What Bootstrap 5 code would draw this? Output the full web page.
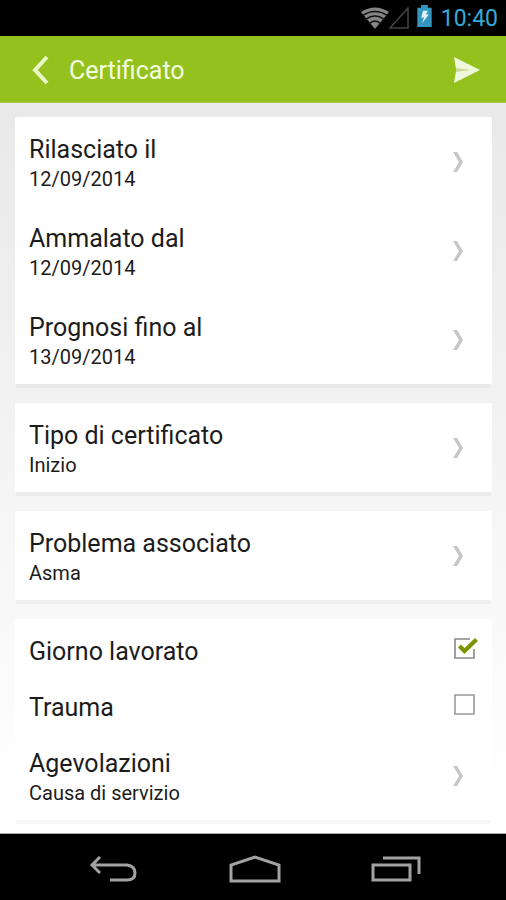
<!DOCTYPE html>
<html lang="it">
<head>
<meta charset="utf-8">
<meta name="viewport" content="width=device-width, initial-scale=1">
<title>Certificato</title>
<link href="https://cdn.jsdelivr.net/npm/bootstrap@5.3.0/dist/css/bootstrap.min.css" rel="stylesheet">
<style>
  body { font-family: Roboto, "Noto Sans", sans-serif; color: #1c1c1c; background: #000; }
  button { border: 0; background: none; padding: 0; color: inherit; }
  svg { display: block; flex: none; }
  .status-bar { height: 36px; background: #000; color: #36a9d8; padding-right: 8px; }
  .clock { font-size: 23px; line-height: 36px; margin-left: 9px; padding-top: 2px; }
  .app-bar { height: 67px; background: #95c11f; color: #f4fde0; padding: 2px 25px 0 31px; border-bottom: 1px solid #a9cd50; }
  .app-title { font-size: 25px; line-height: 30px; font-weight: 400; padding: 2px 0 0 20px; }
  .page-body { background: linear-gradient(#e9e9e9, #f4f4f4 50%, #fff 95%); padding: 14px 14px 13px 15px; gap: 19px; border-bottom: 1px solid #aaa; }
  .panel { background: #fff; border-radius: 2px; box-shadow: 0 5px 0 -1px rgba(0, 0, 0, .035); }
  .entry { padding: 18px 28px 13px 14px; }
  .entry-check { padding: 18px 13px 8px 14px; }
  .entry-title { font-size: 25px; line-height: 30px; }
  .entry-value { font-size: 20px; line-height: 28px; }
  .tick {
    appearance: none; flex: none; width: 25px; height: 24px; margin: 0;
    background: url("data:image/svg+xml,%3Csvg xmlns='http://www.w3.org/2000/svg' viewBox='0 0 25 24'%3E%3Cpath d='M1 2H20V21H1Z' fill='none' stroke='%23999' stroke-width='1.6'/%3E%3C/svg%3E");
  }
  .tick:checked {
    background-image: url("data:image/svg+xml,%3Csvg xmlns='http://www.w3.org/2000/svg' viewBox='0 0 25 24'%3E%3Cpath d='M16 2H1V21H20V12' fill='none' stroke='%23888' stroke-width='1.6'/%3E%3Cpath d='M5.500 9L10.500 14L22.500 2.500' fill='none' stroke='%23799600' stroke-width='4.2'/%3E%3C/svg%3E");
  }
  .nav-keys { height: 67px; background: #000; padding: 2px 85px 0 88px; }
</style>
</head>
<body class="d-flex flex-column min-vh-100">

<div class="status-bar d-flex align-items-center justify-content-end">
  <svg width="28" height="22" viewBox="0 0 28 22" aria-label="Wi-Fi" role="img">
    <path d="M0 5Q14-4 28 5L14 22Z" fill="#858585"/>
    <path d="M1 9Q14 0 27 9M4 13Q14 5 24 13M8 17Q14 11 20 17" fill="none" stroke="#111" stroke-width="1.300"/>
  </svg>
  <svg width="20" height="22" viewBox="0 0 20 22" aria-label="Segnale" role="img">
    <path d="M1 21L19 1V21Z" fill="none" stroke="#444" stroke-width="1.500"/>
  </svg>
  <svg class="ms-2 mb-1" width="15" height="22" viewBox="0 0 15 23" aria-label="Batteria" role="img">
    <path d="M0 3H4V0H11V3H15V23H0Z" fill="#3296c0"/>
    <path d="M6 6H11L9 10H12L5 19L7 13H4Z" fill="#e4f4fa"/>
  </svg>
  <span class="clock">10:40</span>
</div>

<header class="app-bar d-flex align-items-center">
  <button type="button" aria-label="Indietro">
    <svg width="18" height="30" viewBox="0 0 18 30"><path d="M16 2L4 15L16 28" fill="none" stroke="#e9f8c9" stroke-width="4"/></svg>
  </button>
  <h1 class="app-title m-0 flex-grow-1">Certificato</h1>
  <button type="button" aria-label="Invia">
    <svg width="28" height="28" viewBox="0 0 28 28"><path d="M1 1L27 14L1 27L3 15L15 14L3 13Z" fill="#eff8da"/><path d="M3 12L17 14L3 16Z" fill="#c8db90"/></svg>
  </button>
</header>

<main class="page-body d-flex flex-column flex-grow-1">
  <section class="panel">
    <button type="button" class="entry w-100 d-flex align-items-center justify-content-between text-start">
      <span><span class="entry-title d-block">Rilasciato il</span><span class="entry-value d-block">12/09/2014</span></span>
      <svg class="mb-1" width="12" height="20" viewBox="0 0 12 20"><path d="M1 0H5L11 10L5 20H1L7 10Z" fill="#c6c6c6"/></svg>
    </button>
    <button type="button" class="entry w-100 d-flex align-items-center justify-content-between text-start">
      <span><span class="entry-title d-block">Ammalato dal</span><span class="entry-value d-block">12/09/2014</span></span>
      <svg class="mb-1" width="12" height="20" viewBox="0 0 12 20"><path d="M1 0H5L11 10L5 20H1L7 10Z" fill="#c6c6c6"/></svg>
    </button>
    <button type="button" class="entry w-100 d-flex align-items-center justify-content-between text-start">
      <span><span class="entry-title d-block">Prognosi fino al</span><span class="entry-value d-block">13/09/2014</span></span>
      <svg class="mb-1" width="12" height="20" viewBox="0 0 12 20"><path d="M1 0H5L11 10L5 20H1L7 10Z" fill="#c6c6c6"/></svg>
    </button>
  </section>

  <section class="panel">
    <button type="button" class="entry w-100 d-flex align-items-center justify-content-between text-start">
      <span><span class="entry-title d-block">Tipo di certificato</span><span class="entry-value d-block">Inizio</span></span>
      <svg class="mb-1" width="12" height="20" viewBox="0 0 12 20"><path d="M1 0H5L11 10L5 20H1L7 10Z" fill="#c6c6c6"/></svg>
    </button>
  </section>

  <section class="panel">
    <button type="button" class="entry w-100 d-flex align-items-center justify-content-between text-start">
      <span><span class="entry-title d-block">Problema associato</span><span class="entry-value d-block">Asma</span></span>
      <svg class="mb-1" width="12" height="20" viewBox="0 0 12 20"><path d="M1 0H5L11 10L5 20H1L7 10Z" fill="#c6c6c6"/></svg>
    </button>
  </section>

  <section class="panel">
    <div class="entry-check d-flex justify-content-between">
      <label class="entry-title flex-grow-1" for="giorno">Giorno lavorato</label>
      <input class="tick" type="checkbox" id="giorno" checked>
    </div>
    <div class="entry-check d-flex justify-content-between">
      <label class="entry-title flex-grow-1" for="trauma">Trauma</label>
      <input class="tick" type="checkbox" id="trauma">
    </div>
    <button type="button" class="entry w-100 d-flex align-items-center justify-content-between text-start">
      <span><span class="entry-title d-block">Agevolazioni</span><span class="entry-value d-block">Causa di servizio</span></span>
      <svg class="mb-1" width="12" height="20" viewBox="0 0 12 20"><path d="M1 0H5L11 10L5 20H1L7 10Z" fill="#c6c6c6"/></svg>
    </button>
  </section>
</main>

<nav class="nav-keys d-flex align-items-center justify-content-between" aria-label="Sistema">
  <button type="button" aria-label="Indietro">
    <svg width="50" height="28" viewBox="0 0 50 28"><path d="M12 2L4 10L12 18M4 10H39Q47 11 47 18Q47 25 39 25H22" fill="none" stroke="#a2a2a2" stroke-width="3"/></svg>
  </button>
  <button type="button" aria-label="Home">
    <svg width="54" height="30" viewBox="0 0 54 30"><path d="M3 27V11L27 3L51 11V27Z" fill="none" stroke="#a2a2a2" stroke-width="3"/></svg>
  </button>
  <button type="button" aria-label="Recenti">
    <svg width="50" height="28" viewBox="0 0 50 28"><path d="M2 10H39V25H2ZM12 3H48V19" fill="none" stroke="#a2a2a2" stroke-width="3"/></svg>
  </button>
</nav>

<script src="https://cdn.jsdelivr.net/npm/bootstrap@5.3.0/dist/js/bootstrap.bundle.min.js"></script>
</body>
</html>
